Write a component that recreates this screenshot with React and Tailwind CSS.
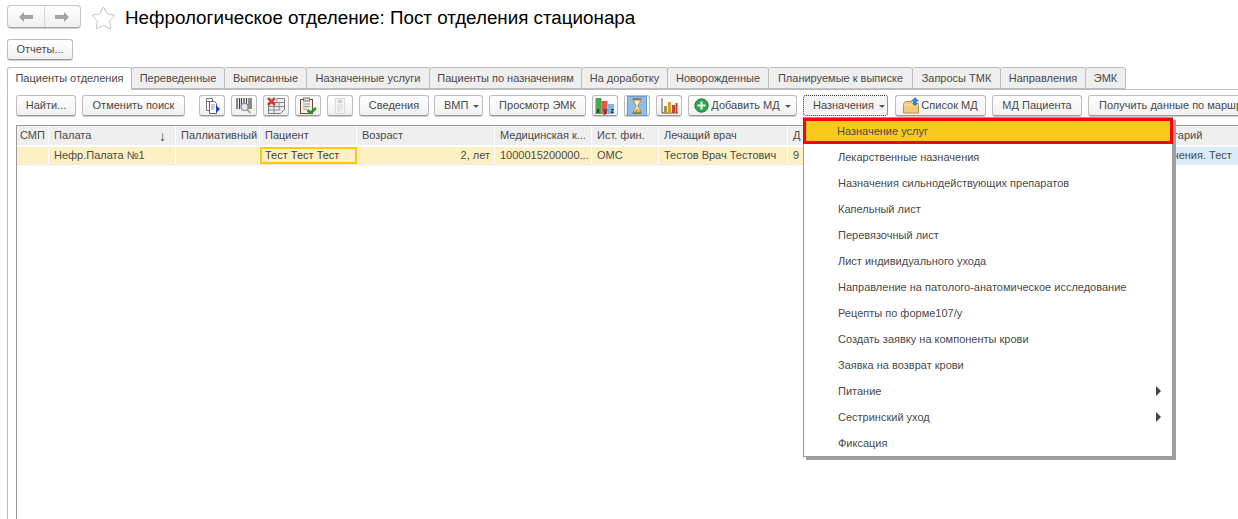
import { Star } from 'lucide-react';

const tabs = [
    ['Пациенты отделения', 'w-[125px]'],
    ['Переведенные', 'w-[94px]'],
    ['Выписанные', 'w-[83px]'],
    ['Назначенные услуги', 'w-[124px]'],
    ['Пациенты по назначениям', 'w-[153px]'],
    ['На доработку', 'w-[87px]'],
    ['Новорожденные', 'w-[102px]'],
    ['Планируемые к выписке', 'w-[145px]'],
    ['Запросы ТМК', 'w-[89px]'],
    ['Направления', 'w-[86px]'],
    ['ЭМК', 'w-[41px]'],
];

const columns = [
    ['СМП', 'w-[32px]', ''],
    ['Палата', 'w-[127px]', 'Нефр.Палата №1'],
    ['Паллиативный', 'w-[84px]', ''],
    ['Пациент', 'w-[97px]', 'Тест Тест Тест'],
    ['Возраст', 'w-[138px]', '2, лет'],
    ['Медицинская к...', 'w-[97px]', '1000015200000...'],
    ['Ист. фин.', 'w-[67px]', 'ОМС'],
    ['Лечащий врач', 'w-[129px]', 'Тестов Врач Тестович'],
    ['Д', 'w-[340px]', '9'],
    ['Комментарий', 'w-[120px]', 'Назначения. Тест'],
];

const menuItems = [
    'Назначение услуг',
    'Лекарственные назначения',
    'Назначения сильнодействующих препаратов',
    'Капельный лист',
    'Перевязочный лист',
    'Лист индивидуального ухода',
    'Направление на патолого-анатомическое исследование',
    'Рецепты по форме107/у',
    'Создать заявку на компоненты крови',
    'Заявка на возврат крови',
    'Питание',
    'Сестринский уход',
    'Фиксация',
];

const Btn = ({ className = '', children }) => (
    <div className={`flex h-[21px] shrink-0 items-center justify-center rounded-[3px] border border-[#bdbdbd] border-b-[#9a9a9a] bg-gradient-to-b from-white to-[#f1f1f1] shadow-[0_1px_0_#cfcfcf] whitespace-nowrap ${className}`}>
        {children}
    </div>
);

const Caret = () => <span className="ml-[5px] mt-[1px] h-0 w-0 border-x-[3.5px] border-t-[3.5px] border-x-transparent border-t-[#555]" />;

const IconDoc = () => (
    <svg width="18" height="18" viewBox="0 0 18 18">
        <path d="M3.5 1.500h6v3h-6zM3.500 1.500v12h3" fill="#fff" stroke="#777" />
        <path d="M6.500 4.500h5l2 2v10h-7z" fill="#fff" stroke="#666" />
        <path d="M8 8h4M8 10h4M8 12h3" stroke="#999" />
        <path d="M13 8l4 4-4 4z" fill="#1a3fd0" />
    </svg>
);
const IconBarcode = () => (
    <svg width="18" height="18" viewBox="0 0 18 18">
        <path d="M2 1v11M4.500 1v11M6.500 1v9M9 1v6M11.500 1v6M14 1v11M16 1v11" stroke="#444" strokeWidth="1.200" />
        <circle cx="9.500" cy="10" r="3.500" fill="#dfe9f3" stroke="#8a8a8a" strokeWidth="1.200" />
        <path d="M12 12.500l3.500 3.500" stroke="#c9a25a" strokeWidth="2" />
    </svg>
);
const IconDeleteTable = () => (
    <svg width="20" height="18" viewBox="0 0 20 18">
        <path d="M2.500 5.500h16v7l-4 4h-12z" fill="#efefef" stroke="#777" />
        <path d="M2.500 9.500h16M2.500 13h12M8 5.500v11M13 1.500v11" stroke="#888" />
        <path d="M11 1.500h7.500v4H11z" fill="#f2f2f2" stroke="#888" />
        <path d="M2 1l7 7M9 1L2 8" stroke="#d9382e" strokeWidth="2.600" />
    </svg>
);
const IconClipboard = () => (
    <svg width="20" height="18" viewBox="0 0 20 18">
        <rect x="2.500" y="2.500" width="12" height="14" fill="#f6efe3" stroke="#6b4a35" />
        <rect x="5.500" y="1" width="6" height="3" fill="#d9d9d9" stroke="#777" />
        <path d="M5 7h7M5 9.500h7M5 12h4" stroke="#9a9a9a" />
        <path d="M9.500 13l3 3 5.500-5" fill="none" stroke="#25962f" strokeWidth="2.600" />
    </svg>
);
const IconPale = () => (
    <svg width="18" height="18" viewBox="0 0 18 18">
        <rect x="4.500" y="1.500" width="9" height="15" fill="#f3f3f3" stroke="#d8d8d8" />
        <rect x="7" y="3" width="4" height="3" fill="#c3d3d6" />
        <path d="M6.500 8h5M6.500 10h5M6.500 12h5M6.500 14h3" stroke="#cdd5d5" />
    </svg>
);
const IconXyz = () => (
    <svg width="20" height="18" viewBox="0 0 20 18">
        <rect x="0.500" y="1" width="6" height="16" fill="#4aa84a" />
        <rect x="6.500" y="4" width="6" height="13" fill="#e4574f" />
        <rect x="13" y="7" width="6" height="10" fill="#7fb8e6" />
        <text x="1" y="15.500" fontSize="7" fontWeight="700" fill="#10304a" fontFamily="Liberation Sans, sans-serif" textLength="18">xyz</text>
    </svg>
);
const IconHourglass = () => (
    <svg width="20" height="20" viewBox="0 0 20 20">
        <rect x="0.500" y="0.500" width="19" height="19" fill="#8fbde6" stroke="#6a9fd0" />
        <path d="M5.500 3h9M5.500 17h9" stroke="#8a6a2a" strokeWidth="1.500" />
        <path d="M6.500 4h7c0 3-2.500 4.500-2.500 6s2.500 3 2.500 6h-7c0-3 2.500-4.500 2.500-6S6.500 7 6.500 4z" fill="#f5efd8" stroke="#b08a3a" />
        <path d="M7.500 15.500c.5-1.500 2-2.500 2.500-3 .5.500 2 1.500 2.500 3z" fill="#e0a020" />
    </svg>
);
const IconChart = () => (
    <svg width="19" height="18" viewBox="0 0 19 18">
        <path d="M2 1v15h16" fill="none" stroke="#555" />
        <rect x="4" y="9" width="3" height="7" fill="#9a9a3a" />
        <rect x="8" y="5" width="3" height="11" fill="#d9a02a" />
        <rect x="12" y="8" width="3" height="8" fill="#c4453a" />
        <rect x="15.500" y="6" width="2" height="10" fill="#b9472f" />
    </svg>
);
const IconAdd = () => (
    <svg width="15" height="15" viewBox="0 0 15 15">
        <circle cx="7.500" cy="7.500" r="6.700" fill="#2ea44f" stroke="#1c7d38" />
        <path d="M7.500 3.500v8M3.500 7.500h8" stroke="#e8f7ea" strokeWidth="2.200" />
    </svg>
);
const IconFolderUp = () => (
    <svg width="17" height="17" viewBox="0 0 17 17">
        <path d="M.5 6.500l2-2h6l1 2h6v9.500H.5z" fill="#f0cc7a" stroke="#b59140" />
        <path d="M.5 8h15" stroke="#fbe6ae" />
        <path d="M12 .5l3.500 3.500h-2v4h-3V4h-2z" fill="#2f86d8" stroke="#1d5fa3" strokeWidth=".5" />
    </svg>
);

const iconsA = [IconDoc, IconBarcode, IconDeleteTable, IconClipboard, IconPale];
const iconsB = [IconXyz, IconHourglass, IconChart];

const App = () => (
    <div className="relative h-[519px] w-[1238px] overflow-hidden bg-white text-[11px] leading-none text-[#4a4a4a]" style={{ fontFamily: '"Liberation Sans", Arial, sans-serif' }}>
        {/* Header */}
        <div className="flex h-[39px] items-start pl-[7px] pt-[5px]">
            <div className="flex h-[23px] w-[74px] rounded-[4px] border border-[#c4c4c4] border-b-[#a5a5a5] bg-gradient-to-b from-white to-[#f0f0f0] shadow-[0_1px_0_#cfcfcf]">
                <div className="flex flex-1 items-center justify-center border-r border-[#d5d5d5]">
                    <svg width="16" height="12" viewBox="0 0 16 12"><path d="M1 6l5-5v3h9v4H6v3z" fill="#a3a3a3" /></svg>
                </div>
                <div className="flex flex-1 items-center justify-center">
                    <svg width="16" height="12" viewBox="0 0 16 12"><path d="M15 6l-5-5v3H1v4h9v3z" fill="#a3a3a3" /></svg>
                </div>
            </div>
            <Star size={27} strokeWidth={0.7} className="ml-[9px] text-[#b0b0b0]" />
            <span className="ml-[8px] mt-[3px] text-[18.8px] leading-5 whitespace-nowrap text-black">Нефрологическое отделение: Пост отделения стационара</span>
        </div>

        {/* Reports button */}
        <div className="h-[28px] pl-[7px]">
            <Btn className="w-[66px]">Отчеты...</Btn>
        </div>

        {/* Tabs */}
        <div className="flex h-[22px] items-start pl-[7px]">
            {tabs.map(([label, width], i) => (
                <div
                    key={label}
                    className={`relative flex shrink-0 items-center justify-center rounded-t-[3px] border border-[#bcbcbc] whitespace-nowrap ${width} ${i === 0 ? 'z-10 h-[23px] border-b-white bg-white' : 'h-[22px] -ml-px bg-[#efefef]'}`}
                >
                    {label}
                </div>
            ))}
        </div>

        {/* Panel */}
        <div className="ml-[7px] flex h-[430px] flex-col border-l border-t border-[#bcbcbc] pl-[8px] pt-[5px]">
            <div className="flex h-[30px] shrink-0 items-start">
                <Btn className="w-[60px]">Найти...</Btn>
                <Btn className="ml-[6px] w-[103px]">Отменить поиск</Btn>
                <div className="ml-[14px] flex gap-[6px]">
                    {iconsA.map((Icon, i) => (
                        <Btn key={i} className="w-[26px]"><Icon /></Btn>
                    ))}
                </div>
                <Btn className="ml-[6px] w-[70px]">Сведения</Btn>
                <Btn className="ml-[5px] w-[49px] justify-start pl-[9px]">ВМП<Caret /></Btn>
                <Btn className="ml-[6px] w-[97px]">Просмотр ЭМК</Btn>
                <div className="ml-[6px] flex gap-[6px]">
                    {iconsB.map((Icon, i) => (
                        <Btn key={i} className="w-[26px]"><Icon /></Btn>
                    ))}
                </div>
                <Btn className="ml-[6px] w-[109px]"><IconAdd /><span className="ml-[2px]">Добавить МД</span><Caret /></Btn>
                <div className="ml-[6px] flex h-[21px] w-[85px] shrink-0 items-center justify-start rounded-[3px] border border-dotted border-[#333] bg-[#f3f3f3] pl-[9px]">Назначения<Caret /></div>
                <Btn className="ml-[7px] w-[91px]"><IconFolderUp /><span className="ml-px">Список МД</span></Btn>
                <Btn className="ml-[6px] w-[90px]">МД Пациента</Btn>
                <Btn className="ml-[6px] w-[200px] justify-start pl-[10px]">Получить данные по маршруту</Btn>
            </div>

            {/* Table */}
            <div className="flex-1 border-l border-t border-[#9a9a9a]">
                <div className="flex h-[21px]">
                    {columns.map(([title, width], i) => (
                        <div key={title} className={`relative flex h-full shrink-0 items-center justify-start border-b-2 border-r border-white bg-[#efefef] whitespace-nowrap ${i === 0 ? 'pl-[3px]' : 'pl-[5px]'} ${width}`}>
                            {title}
                            {i === 1 && <span className="absolute right-[9px] text-[14px]">↓</span>}
                        </div>
                    ))}
                </div>
                <div className="flex h-[17px]">
                    {columns.map(([title, width, value], i) => (
                        <div
                            key={title}
                            className={`flex h-full shrink-0 items-center whitespace-nowrap ${width} ${i === 3 ? 'border-2 border-[#f9c81a] bg-[#fdf1c3] pl-[3px] text-[#4a3a2a]' : 'border-r border-white pl-[5px] pr-[4px]'} ${i === 4 ? 'justify-end' : ''} ${i === 9 ? 'bg-[#d9ebf9] pl-[14px]' : 'bg-[#fdf1c3]'}`}
                        >
                            {value}
                        </div>
                    ))}
                </div>
                <div className="h-px bg-[#e8e8e8]" />
            </div>
        </div>

        {/* Dropdown menu */}
        <div className="absolute left-[803px] top-[117px] w-[370px] border border-[#9a9a9a] bg-white shadow-[3px_3px_0_#a0a0a0]">
            {menuItems.map((item, i) => (
                <div
                    key={item}
                    className={`relative flex h-[26px] items-center whitespace-nowrap ${i === 0 ? '-mx-px border-[3px] border-[#f00] bg-[#f9ca1d] pl-[31px]' : 'pl-[34px]'}`}
                >
                    {item}
                    {(item === 'Питание' || item === 'Сестринский уход') && (
                        <span className="absolute right-[11px] h-0 w-0 border-y-[5px] border-l-[5px] border-y-transparent border-l-[#444]" />
                    )}
                </div>
            ))}
        </div>
    </div>
);

export default App;
